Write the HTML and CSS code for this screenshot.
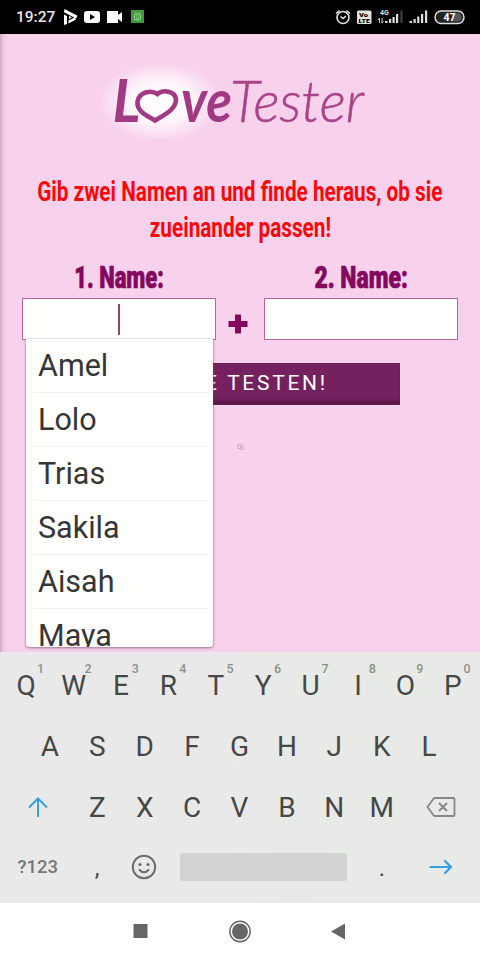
FILE: index.html
```html
<!DOCTYPE html>
<html lang="de">
<head>
<meta charset="utf-8">
<title>LoveTester</title>
<link rel="stylesheet" href="styles.css">
</head>
<body>
<header class="status">
  <span class="clock">19:27</span>
  <svg class="status-left" width="84" height="18" viewBox="0 0 84 18">
    <path d="M2.500 1L15.500 7.800 14 10.500 2 4.200z M2 6.500l3 1.500v8l-3 1z M6.500 12.500l6-3 1.500 2-7.500 4z M7 8l3 1.300L7 11z" fill="#fff"/>
    <rect x="22" y="3" width="16" height="12" rx="3" fill="#fff"/><path d="M28 6l5 3-5 3z" fill="#000"/>
    <path d="M45 3h11v4l4-3v10l-4-3v4H45z" fill="#fff"/>
    <rect x="69" y="2" width="13" height="13" fill="#3c9d3b"/>
    <rect x="72.500" y="6" width="6" height="6" rx="1.500" fill="none" stroke="#a9d79c"/><path d="M74 8h1M76.500 8h1M74 10h3M73 4.500l1 1M78 4.500l-1 1" stroke="#a9d79c"/>
  </svg>
  <svg class="status-right" width="132" height="20" viewBox="334 7 132 20">
    <g fill="none" stroke="#e4e4e4" stroke-width="1.600"><circle cx="343" cy="17.500" r="6"/><path d="M340.500 16.500l2.500 2 3-2.500M336 13.500l3.500-3M350 13.500l-3.500-3"/></g>
    <rect x="357" y="10.500" width="14.500" height="13.500" rx="1.500" fill="#e4e4e4"/>
    <text x="359" y="16.500" class="volte" textLength="9" lengthAdjust="spacingAndGlyphs">Vo</text><text x="358.500" y="22.800" class="volte" textLength="11.500" lengthAdjust="spacingAndGlyphs">LTE</text>
    <text x="380" y="15" class="net">4G</text>
    <path d="M379.500 18v5M382 18v5" stroke="#ccc" stroke-width="1"/><path d="M378 20l1.500-2M382 23l1.500-2" stroke="#ccc"/>
    <g fill="#ddd"><path d="M385 21h2.500v2H385zM389 19h2.200v4h-2.200zM392.500 17h2.200v6h-2.200zM396 14h2.200v9h-2.200z"/><path fill="#444" d="M400.500 10.500h2V23h-2z"/>
    <path d="M409.500 21h2.500v2h-2.500zM413.500 19h2.200v4h-2.200zM417.200 16.500h2.200V23h-2.200zM421 14h2.200v9H421zM425 10.500h2.200V23H425z"/></g>
    <rect x="435" y="11" width="29" height="12.500" rx="6.200" fill="#222" stroke="#ddd" stroke-width="1.500"/>
    <path d="M452 13h5.500a4.200 4.200 0 0 1 0 8.500H452z" fill="#555"/>
    <text x="449.500" y="21" text-anchor="middle" class="battery">47</text>
  </svg>
</header>
<main class="page">
  <svg class="logo" width="280" height="90" viewBox="100 60 280 90" role="img">
    <defs><radialGradient id="glow"><stop offset="0" stop-color="#fff"/><stop offset=".5" stop-color="#fff" stop-opacity=".8"/><stop offset="1" stop-color="#fff" stop-opacity="0"/></radialGradient></defs>
    <ellipse cx="160" cy="102" rx="62" ry="40" fill="url(#glow)"/>
    <text class="logo-bold" x="112.500" y="121.500" textLength="28" lengthAdjust="spacingAndGlyphs">L</text>
    <path d="M157.500 94C151 89.500 139 92 137.500 101.500C136.500 112 148 116 155 120.500C163 115.500 176 110 176 99.500C175 90.500 163 89.500 157.500 94Z" fill="none" stroke="#a23a83" stroke-width="4.600"/>
    <text class="logo-bold" x="181" y="121.500" textLength="51" lengthAdjust="spacingAndGlyphs">ve</text>
    <text class="logo-thin" x="230" y="121.500" textLength="134" lengthAdjust="spacingAndGlyphs">Tester</text>
  </svg>
  <h1 class="intro"><span class="line">Gib zwei Namen an und finde heraus, ob sie</span><span class="line">zueinander passen!</span></h1>
  <form class="names">
    <div class="field">
      <label class="label"><span class="squeeze">1. Name:</span></label>
      <div class="input"><i class="caret"></i></div>
      <ul class="suggest"><li>Amel</li><li>Lolo</li><li>Trias</li><li>Sakila</li><li>Aisah</li><li>Maya</li></ul>
    </div>
    <svg class="plus" width="20" height="20" viewBox="0 0 20 20"><path d="M7 .5h6V7h6.500v6H13v6.500H7V13H.5V7H7z" fill="#83085e"/></svg>
    <div class="field">
      <label class="label"><span class="squeeze wide">2. Name:</span></label>
      <div class="input"></div>
    </div>
  </form>
  <div class="button">LIEBE TESTEN!</div>
  <svg class="mark" width="8" height="8" viewBox="0 0 8 8"><path d="M2 1.500h4v3M2 1.500v4h2M4.500 3.500h2.500v3H4.500z" fill="none" stroke="#cda9c5"/></svg>
</main>
<section class="keyboard">
  <div class="row"><b>Q<sup>1</sup></b><b>W<sup>2</sup></b><b>E<sup>3</sup></b><b>R<sup>4</sup></b><b>T<sup>5</sup></b><b>Y<sup>6</sup></b><b>U<sup>7</sup></b><b>I<sup>8</sup></b><b>O<sup>9</sup></b><b>P<sup>0</sup></b></div>
  <div class="row"><b>A</b><b>S</b><b>D</b><b>F</b><b>G</b><b>H</b><b>J</b><b>K</b><b>L</b></div>
  <div class="row">
    <b class="side"><svg width="22" height="22" viewBox="0 0 22 22" fill="none" stroke="#35a0de" stroke-width="2"><path d="M11 20V2M2 10.500l9-9 9 9"/></svg></b>
    <b>Z</b><b>X</b><b>C</b><b>V</b><b>B</b><b>N</b><b>M</b>
    <b class="side"><svg width="30" height="22" viewBox="0 0 30 22" fill="none" stroke="#858785" stroke-width="1.800"><path d="M9 1h18.500q1 0 1 1v16q0 1-1 1H9q-1 0-1.500-.8L1.500 10l6-8.200Q8 1 9 1zM13 6l8 8M21 6l-8 8"/></svg></b>
  </div>
  <div class="row bottom">
    <b class="side mode">?123</b><b class="comma">,</b>
    <b><svg width="26" height="26" viewBox="0 0 26 26" fill="none" stroke="#6d6d6d" stroke-width="2"><circle cx="13" cy="13" r="11.200"/><path d="M8 15.500q5 5.500 10 0"/><circle cx="9" cy="10.500" r="1.600" fill="#6d6d6d" stroke="none"/><circle cx="17" cy="10.500" r="1.600" fill="#6d6d6d" stroke="none"/></svg></b>
    <b class="space"><i></i></b><b class="dot">.</b>
    <b class="side"><svg width="24" height="16" viewBox="0 0 24 16" fill="none" stroke="#35a0de" stroke-width="2.200" stroke-linecap="round"><path d="M1.500 8H22M16 2l6 6-6 6"/></svg></b>
  </div>
</section>
<nav class="nav">
  <svg width="480" height="57" viewBox="0 903 480 57" fill="#666"><path d="M133.500 924h14v14h-14zM331 931.500l14-8v16z"/><circle cx="240" cy="931.500" r="8"/><circle cx="240" cy="931.500" r="10.200" fill="none" stroke="#666" stroke-width="1.400"/></svg>
</nav>
</body>
</html>
```
FILE: styles.css
```css
* { box-sizing: border-box; }
body { margin: 0; width: 480px; height: 960px; overflow: hidden; font-family: Roboto, sans-serif; background: #fff; }
svg { display: block; flex: none; }
.status { height: 34px; background: #000; display: flex; align-items: center; padding: 0 14px 0 16px; }
.clock { color: #e6e6e6; font-size: 15.500px; font-weight: 500; width: 46px; }
.status-right { margin-left: auto; }
.volte { font: 900 6px Roboto, sans-serif; fill: #000; }
.net { font: 700 7px Roboto, sans-serif; fill: #ddd; }
.battery { font: 700 10.500px Roboto, sans-serif; fill: #fff; }

.page { height: 618px; overflow: hidden; background: linear-gradient(90deg, #c9a7c0 0, #edc7e2 3px, #f8d1ec 8px); display: flex; flex-direction: column; align-items: center; padding-top: 26px; }
.logo-bold { font: italic 700 58.500px Lato, sans-serif; fill: #a23a83; }
.logo-thin { font: italic 300 58px Lato, sans-serif; fill: #a94389; stroke: #a94389; stroke-width: .5px; }
.intro { margin: 24px 0 0; width: 480px; color: #f80808; font: 700 28px/36px Roboto, sans-serif; display: flex; flex-direction: column; align-items: center; }
.line { white-space: nowrap; transform: scaleX(.74); }
.names { display: flex; width: 436px; justify-content: space-between; margin-top: 13px; position: relative; z-index: 1; }
.field { width: 194px; position: relative; }
.label { display: flex; justify-content: center; height: 39px; color: #83085e; font: 900 31px/37px Roboto, sans-serif; white-space: nowrap; -webkit-text-stroke: .7px #83085e; }
.squeeze { transform: scaleX(.71); }
.wide { transform: scaleX(.74); }
.input { height: 42px; background: #fffffd; border: 1px solid #b765a1; display: flex; justify-content: center; align-items: center; }
.caret { width: 1.500px; height: 31px; background: #96426f; }
.plus { margin: 55px 4px 0 0; }
.suggest { position: absolute; left: 4px; top: 80px; width: 187px; height: 308px; margin: 0; padding: 0 4px 0 7px; list-style: none; overflow: hidden; background: #fffffd; border-radius: 0 0 3px 3px; box-shadow: 0 1px 3px #6c3c6699, 0 0 1px #765; }
.suggest li { height: 54.100px; padding-left: 5px; line-height: 53px; font-size: 30.500px; color: #363636; border-bottom: 1px solid #f2f2f2; }
.button { margin-top: 23px; width: 320px; height: 42px; background: linear-gradient(#75215f 85%, #551342); border: 1px solid #6b1c56; color: #fff; font-size: 21px; line-height: 39px; letter-spacing: 2.700px; text-align: center; flex: none; }
.mark { margin-top: 38px; }

.keyboard { height: 251px; padding-top: 3px; background: linear-gradient(90deg, #e9e9e9 40%, #e7eae7 70%); }
.row { height: 61px; display: flex; justify-content: center; padding-right: 1px; }
.row b { width: 47.400px; flex: none; display: flex; align-items: center; justify-content: center; font-size: 28px; font-weight: 400; color: #464846; position: relative; }
.row sup { position: absolute; left: 34.500px; top: 6px; font-size: 12.500px; line-height: 15px; font-weight: 500; color: #8b908b; }
.row .side { width: 71.200px; }
.bottom { height: 58px; }
.row .mode { font-size: 18.500px; font-weight: 500; color: #777; }
.row .comma, .row .dot { font-size: 24px; padding-top: 2px; }
.row .space { width: 190px; }
.space i { width: 167px; height: 28px; border-radius: 3px; background: #d2d2d2; }
.nav { height: 57px; background: #fff; }
```
